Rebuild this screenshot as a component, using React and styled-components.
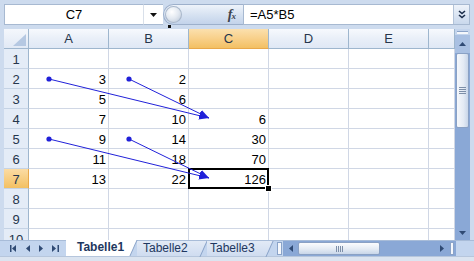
import React from "react";
import styled, { createGlobalStyle, css } from "styled-components";

const GlobalStyle = createGlobalStyle`
  html, body { margin: 0; padding: 0; overflow: hidden; background: #cddbee; }
`;

const Window = styled.div`
  width: 474px;
  height: 261px;
  display: flex;
  flex-direction: column;
  background: #cddbee;
  font-family: "Liberation Sans", Arial, sans-serif;
  overflow: hidden;
`;

// formula bar

const FormulaBar = styled.div`
  height: 29px;
  box-sizing: border-box;
  padding: 4px 4px 4px 4px;
  display: flex;
`;

const NameBox = styled.div`
  width: 139px;
  box-sizing: border-box;
  background: #fff;
  border: 1px solid #a7b9d1;
  border-right: none;
  font-size: 13px;
  line-height: 19px;
  text-align: center;
  color: #000;
`;

const NameDrop = styled.div`
  width: 20px;
  box-sizing: border-box;
  background: #fff;
  border-top: 1px solid #a7b9d1;
  border-bottom: 1px solid #a7b9d1;
  border-left: 1px solid #d9e0ea;
  display: flex;
  align-items: center;
  justify-content: center;
  padding-right: 1px;
`;

const FxPill = styled.div`
  position: relative;
  width: 80px;
  box-sizing: border-box;
  border: 1px solid #9db0cb;
  border-right: none;
  border-radius: 11px 0 0 11px;
  background: linear-gradient(#eef3fa, #d5e1f1 55%, #c3d3ea);
  display: flex;
  align-items: center;
  justify-content: space-between;
  padding: 0 8px 0 1px;
`;

const Knob = styled.div`
  width: 17px;
  height: 17px;
  border-radius: 50%;
  background: radial-gradient(circle at 40% 35%, #ffffff 0%, #e2e8f0 45%, #aebccf 100%);
  box-shadow: inset 0 0 0 1px #a9b8cc;
`;

const Handle = styled.div`
  position: absolute;
  left: 4px;
  bottom: -4px;
  width: 3px;
  height: 3px;
  background: #111;
`;

const Fx = styled.span`
  font-family: "Liberation Serif", "Times New Roman", serif;
  font-style: italic;
  font-weight: bold;
  font-size: 14px;
  color: #3d4450;
  letter-spacing: -1px;
  sub {
    font-size: 9px;
    vertical-align: 0;
  }
`;

const FormulaBox = styled.div`
  flex: 1;
  display: flex;
  background: #fff;
  border: 1px solid #a7b9d1;
`;

const FormulaText = styled.div`
  flex: 1;
  padding-left: 6px;
  font-size: 13px;
  line-height: 19px;
  color: #000;
`;

const ExpandBtn = styled.div`
  width: 15px;
  background: linear-gradient(#eef3fa, #c9d8ec);
  border-left: 1px solid #b3c3d8;
  display: flex;
  align-items: center;
  justify-content: center;
`;

// sheet

const Main = styled.div`
  height: 211px;
  display: flex;
`;

const Strip = styled.div`
  width: ${(p) => p.$w}px;
  flex-shrink: 0;
`;

const Sheet = styled.div`
  position: relative;
  width: 451px;
  overflow: hidden;
  background: #fff;
  display: grid;
  grid-template-columns: 25px repeat(5, 80px) 26px;
  grid-auto-rows: 20px;
`;

const headerBase = css`
  box-sizing: border-box;
  font-size: 13px;
  color: #26364c;
  text-align: center;
  border-right: 1px solid #9eb6ce;
  border-bottom: 1px solid #9eb6ce;
`;

const Corner = styled.div`
  ${headerBase};
  position: relative;
  background: linear-gradient(#f4f7fc, #e1e9f5);
  &::after {
    content: "";
    position: absolute;
    right: 2px;
    bottom: 2px;
    width: 13px;
    height: 12px;
    background: #b5c8e2;
    clip-path: polygon(100% 0, 100% 100%, 0 100%);
  }
`;

const ColHeader = styled.div`
  ${headerBase};
  line-height: 19px;
  background: ${(p) =>
    p.$active
      ? "linear-gradient(#fbe0ae, #f8d08a 50%, #f3c063)"
      : "linear-gradient(#f7f9fd, #e9eff8 50%, #dfe8f5)"};
  ${(p) => p.$active && "border-bottom-color: #e8a84a;"}
`;

const RowHeader = styled.div`
  ${headerBase};
  border-bottom-color: #c5d3e5;
  line-height: 16px;
  padding-top: 3px;
  background: ${(p) =>
    p.$active ? "linear-gradient(#fbdca4, #f3c062)" : "#e4ecf7"};
  ${(p) => p.$active && "border-right-color: #e8a84a;"}
`;

const Cell = styled.div`
  position: relative;
  box-sizing: border-box;
  border-right: 1px solid #d0d7e5;
  border-bottom: 1px solid #d0d7e5;
  font-size: 13px;
  line-height: 16px;
  padding: 3px 2px 0 0;
  text-align: right;
  color: #000;
  ${(p) =>
    p.$selected &&
    css`
      &::after {
        content: "";
        position: absolute;
        top: -1px;
        left: -1px;
        right: -1px;
        bottom: -1px;
        border: 2px solid #000;
        z-index: 2;
      }
      &::before {
        content: "";
        position: absolute;
        right: -4px;
        bottom: -4px;
        width: 5px;
        height: 5px;
        background: #000;
        border: 1px solid #fff;
        z-index: 3;
      }
    `}
`;

const Arrows = styled.svg`
  position: absolute;
  left: 0;
  top: 0;
  width: 451px;
  height: 211px;
  pointer-events: none;
  z-index: 4;
`;

// vertical scrollbar

const VScroll = styled.div`
  width: 15px;
  display: flex;
  flex-direction: column;
  background: #8aa8d6;
`;

const VSplit = styled.div`
  height: 6px;
  background: #c3d4ec;
  display: flex;
  align-items: center;
  justify-content: center;
  &::after {
    content: "";
    width: 11px;
    height: 2px;
    background: #f4f7fb;
    border-top: 1px solid #8ba3c8;
  }
`;

const ArrowBtn = styled.div`
  height: ${(p) => p.$h}px;
  width: ${(p) => p.$w}px;
  flex-shrink: 0;
  display: flex;
  align-items: center;
  justify-content: center;
  background: ${(p) => (p.$light ? "#a9c0e2" : "transparent")};
`;

const VThumb = styled.div`
  height: 75px;
  margin: 0 1px;
  box-sizing: border-box;
  border: 1px solid #8aa1c4;
  border-radius: 2px;
  background: linear-gradient(to right, #f6f8fc, #e3eaf4 60%, #c9d6e9);
  display: flex;
  align-items: center;
  justify-content: center;
  &::after {
    content: "";
    width: 7px;
    height: 7px;
    background: repeating-linear-gradient(#7c8ea8 0 1px, transparent 1px 2px);
  }
`;

const Track = styled.div`
  flex: 1;
`;

// tabs bar

const TabBar = styled.div`
  height: 16px;
  display: flex;
  background: #c3d5ee;
  border-top: 1px solid #a8bcd8;
  box-sizing: border-box;
`;

const Nav = styled.div`
  width: 62px;
  flex-shrink: 0;
  display: flex;
  align-items: center;
  padding-left: 6px;
  gap: 9px;
  box-sizing: border-box;
  svg {
    flex-shrink: 0;
  }
`;

const Tab = styled.div`
  position: relative;
  width: ${(p) => p.$w}px;
  flex-shrink: 0;
  box-sizing: border-box;
  padding-left: ${(p) => p.$pad}px;
  margin-top: ${(p) => (p.$active ? -1 : 0)}px;
  font-size: 12px;
  line-height: 15px;
  font-weight: ${(p) => (p.$active ? "bold" : "normal")};
  color: #1e3760;
  z-index: ${(p) => (p.$active ? 1 : 0)};
  &::before {
    content: "";
    position: absolute;
    inset: 0;
    background: ${(p) =>
      p.$active ? "#fff" : "linear-gradient(#e2eaf6, #cfdcf0)"};
    clip-path: polygon(0 0, 100% 0, calc(100% - 7px) 100%, 0 100%);
    z-index: -1;
  }
  &::after {
    content: "";
    position: absolute;
    top: 0;
    right: 3px;
    width: 1px;
    height: 16px;
    background: #8aa3c8;
    transform: skewX(-24deg);
  }
`;

const TabSplit = styled.div`
  width: 9px;
  display: flex;
  align-items: center;
  justify-content: flex-end;
  &::after {
    content: "";
    width: 3px;
    height: 11px;
    background: #f6f8fc;
    border: 1px solid #8aa3c8;
  }
`;

const HScroll = styled.div`
  width: 173px;
  display: flex;
  align-items: stretch;
  background: #8aa8d6;
  border-left: 1px solid #c6d7ee;
`;

const HThumb = styled.div`
  width: 82px;
  margin: 1px 0;
  box-sizing: border-box;
  border: 1px solid #8aa1c4;
  border-radius: 2px;
  background: linear-gradient(#fbfcfe, #e4ebf4 55%, #c8d6e9);
  display: flex;
  align-items: center;
  justify-content: center;
  &::after {
    content: "";
    width: 7px;
    height: 6px;
    background: repeating-linear-gradient(to right, #7c8ea8 0 1px, transparent 1px 2px);
  }
`;

const HEnd = styled.div`
  width: 8px;
  display: flex;
  align-items: center;
  justify-content: center;
  &::after {
    content: "";
    width: 2px;
    height: 11px;
    background: #f6f8fc;
    border: 1px solid #8aa3c8;
  }
`;

const CornerBox = styled.div`
  flex: 1;
  background: #c3d5ee;
`;

const StatusStrip = styled.div`
  flex: 1;
  background: #dbe4f0;
  border-top: 1px solid #b6c6dc;
`;

// small drawings

const Tri = ({ dir = "down", color = "#2f4a74" }) => {
  const pts = {
    down: "0,0 7,0 3.5,4",
    up: "0,4 7,4 3.5,0",
    left: "4,0 4,7 0,3.5",
    right: "0,0 0,7 4,3.5",
  }[dir];
  const vertical = dir === "up" || dir === "down";
  return (
    <svg width={vertical ? 7 : 4} height={vertical ? 4 : 7} viewBox={vertical ? "0 0 7 4" : "0 0 4 7"}>
      <polygon points={pts} fill={color} />
    </svg>
  );
};

const EndTri = ({ dir }) => (
  <svg width="7" height="7" viewBox="0 0 7 7">
    {dir === "left" ? (
      <>
        <rect x="0" y="0" width="1.5" height="7" fill="#2f4a74" />
        <polygon points="6,0 6,7 2,3.5" fill="#2f4a74" />
      </>
    ) : (
      <>
        <polygon points="0,0 0,7 4,3.5" fill="#2f4a74" />
        <rect x="5.5" y="0" width="1.5" height="7" fill="#2f4a74" />
      </>
    )}
  </svg>
);

const Chevrons = () => (
  <svg width="8" height="9" viewBox="0 0 8 9">
    <path d="M1 1 L4 3.5 L7 1 M1 5 L4 7.5 L7 5" stroke="#1b2d4a" strokeWidth="1.6" fill="none" />
  </svg>
);

const columns = ["A", "B", "C", "D", "E", ""];
const data = {
  2: ["3", "2"],
  3: ["5", "6"],
  4: ["7", "10", "6"],
  5: ["9", "14", "30"],
  6: ["11", "18", "70"],
  7: ["13", "22", "126"],
};

const arrows = [
  { from: [45, 50], to: [205, 89] },
  { from: [125, 50], to: [205, 89] },
  { from: [45, 110], to: [205, 149] },
  { from: [125, 110], to: [205, 149] },
];

const ArrowLayer = () => (
  <Arrows viewBox="0 0 451 211">
    <defs>
      <marker id="head" viewBox="0 0 10 8" refX="10" refY="4" markerWidth="10" markerHeight="8" markerUnits="userSpaceOnUse" orient="auto">
        <path d="M0,0 L10,4 L0,8 z" fill="#2121d9" />
      </marker>
    </defs>
    {arrows.map((a, i) => (
      <g key={i}>
        <circle cx={a.from[0]} cy={a.from[1]} r="2.6" fill="#2121d9" />
        <line x1={a.from[0]} y1={a.from[1]} x2={a.to[0]} y2={a.to[1]} stroke="#2121d9" strokeWidth="1" markerEnd="url(#head)" />
      </g>
    ))}
  </Arrows>
);

const SheetGrid = () => {
  const rows = [];
  for (let r = 1; r <= 10; r++) {
    const vals = data[r] || [];
    rows.push(
      <React.Fragment key={r}>
        <RowHeader $active={r === 7}>{r}</RowHeader>
        {columns.map((c, i) => (
          <Cell key={c + i} $selected={r === 7 && i === 2}>
            {vals[i] || ""}
          </Cell>
        ))}
      </React.Fragment>
    );
  }
  return (
    <Sheet>
      <Corner />
      {columns.map((c, i) => (
        <ColHeader key={c + i} $active={c === "C"}>
          {c}
        </ColHeader>
      ))}
      {rows}
      <ArrowLayer />
    </Sheet>
  );
};

const tabs = [
  { name: "Tabelle1", w: 71, pad: 11, active: true },
  { name: "Tabelle2", w: 70, pad: 6 },
  { name: "Tabelle3", w: 66, pad: 3 },
];

export default function App() {
  return (
    <Window>
      <GlobalStyle />
      <FormulaBar>
        <NameBox>C7</NameBox>
        <NameDrop>
          <Tri dir="down" color="#111" />
        </NameDrop>
        <FxPill>
          <Knob />
          <Fx>
            f<sub>x</sub>
          </Fx>
          <Handle />
        </FxPill>
        <FormulaBox>
          <FormulaText>=A5*B5</FormulaText>
          <ExpandBtn>
            <Chevrons />
          </ExpandBtn>
        </FormulaBox>
      </FormulaBar>
      <Main>
        <Strip $w={4} />
        <SheetGrid />
        <VScroll>
          <VSplit />
          <ArrowBtn $h={18} $light>
            <Tri dir="up" />
          </ArrowBtn>
          <VThumb />
          <Track />
          <ArrowBtn $h={15}>
            <Tri dir="down" />
          </ArrowBtn>
        </VScroll>
        <Strip $w={4} />
      </Main>
      <TabBar>
        <Strip $w={4} />
        <Nav>
          <EndTri dir="left" />
          <Tri dir="left" />
          <Tri dir="right" />
          <EndTri dir="right" />
        </Nav>
        {tabs.map((t) => (
          <Tab key={t.name} $w={t.w} $pad={t.pad} $active={t.active}>
            {t.name}
          </Tab>
        ))}
        <TabSplit />
        <HScroll>
          <ArrowBtn $w={15}>
            <Tri dir="left" />
          </ArrowBtn>
          <HThumb />
          <Track />
          <ArrowBtn $w={12}>
            <Tri dir="right" />
          </ArrowBtn>
          <HEnd />
        </HScroll>
        <CornerBox />
      </TabBar>
      <StatusStrip />
    </Window>
  );
}
